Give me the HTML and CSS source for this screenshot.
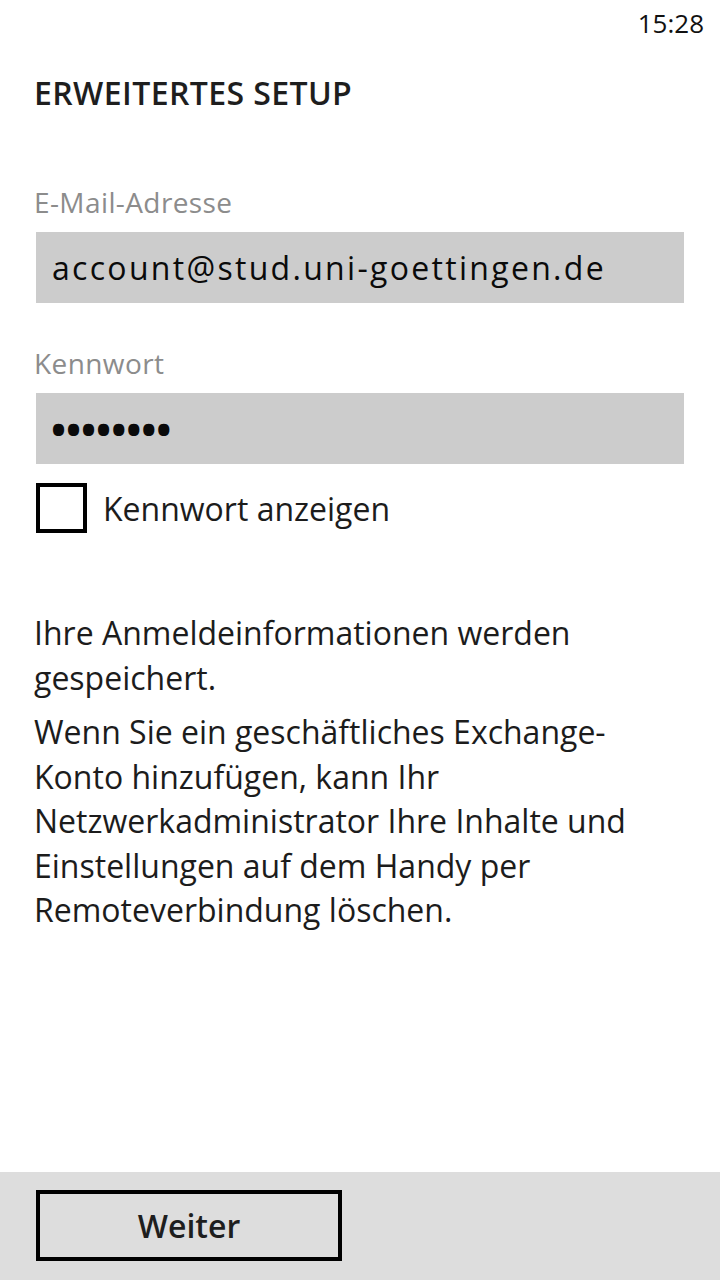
FILE: index.html
```html
<!DOCTYPE html>
<html lang="de">
<head>
<meta charset="utf-8">
<title>Erweitertes Setup</title>
<link rel="stylesheet" href="styles.css">
</head>
<body>
<div class="screen">
  <div class="status-bar"><span class="time">15:28</span></div>
  <main class="content">
    <h1 class="title">ERWEITERTES SETUP</h1>
    <div class="field">
      <div class="label">E-Mail-Adresse</div>
      <div class="input">account@stud.uni-goettingen.de</div>
    </div>
    <div class="field">
      <div class="label">Kennwort</div>
      <div class="input password">••••••••</div>
    </div>
    <div class="check-row">
      <span class="checkbox"></span>
      <span class="check-label">Kennwort anzeigen</span>
    </div>
    <p class="info first">Ihre Anmeldeinformationen werden gespeichert.</p>
    <p class="info">Wenn Sie ein geschäftliches Exchange-Konto hinzufügen, kann Ihr Netzwerkadministrator Ihre Inhalte und Einstellungen auf dem Handy per Remoteverbindung löschen.</p>
  </main>
  <footer class="app-bar">
    <button class="btn">Weiter</button>
  </footer>
</div>
</body>
</html>
```

FILE: styles.css
```css
* { box-sizing: border-box; }
html, body { margin: 0; padding: 0; background: #fff; }
body { font-family: "Open Sans", "Noto Sans", sans-serif; color: #1c1c1c; }

.screen {
  width: 720px;
  height: 1280px;
  display: flex;
  flex-direction: column;
  overflow: hidden;
}

.status-bar {
  height: 46px;
  display: flex;
  justify-content: flex-end;
  align-items: center;
  padding-right: 16px;
}
.time { font-size: 26px; color: #111; }

.content {
  flex: 1;
  padding: 0 36px 0 34px;
}

.title {
  margin: 27px 0 0;
  font-size: 32px;
  line-height: 40px;
  font-weight: 600;
  letter-spacing: 0.4px;
  color: #1e1e1e;
}

.field { margin-top: 71px; }
.field + .field { margin-top: 42px; }

.label {
  font-size: 28px;
  line-height: 36px;
  color: #8c8c8c;
  letter-spacing: 0.4px;
}

.input {
  margin: 12px 0 0 2px;
  height: 71px;
  background: #cccccc;
  padding-left: 16px;
  display: flex;
  align-items: center;
  font-size: 32px;
  letter-spacing: 2.3px;
  color: #0a0a0a;
}
.password {
  font-size: 40px;
  letter-spacing: 0px;
  font-weight: 700;
  padding-left: 15px;
}

.check-row {
  display: flex;
  align-items: center;
  margin: 19px 0 0 2px;
  gap: 16px;
}
.checkbox {
  width: 51px;
  height: 50px;
  border: 4px solid #000;
  flex: none;
}
.check-label {
  font-size: 32px;
  color: #1c1c1c;
}

.info {
  margin: 0;
  font-size: 32px;
  line-height: 44.5px;
  color: #1c1c1c;
}
.info.first { margin-top: 78px; }
.info + .info { margin-top: 10px; }

.app-bar {
  height: 108px;
  background: #dddddd;
  padding: 18px 0 0 36px;
  flex: none;
}
.btn {
  width: 306px;
  height: 71px;
  background: transparent;
  border: 4px solid #000;
  font-family: "Open Sans", "Noto Sans", sans-serif;
  font-size: 32px;
  font-weight: 600;
  color: #1e1e1e;
  padding: 0;
}
```
